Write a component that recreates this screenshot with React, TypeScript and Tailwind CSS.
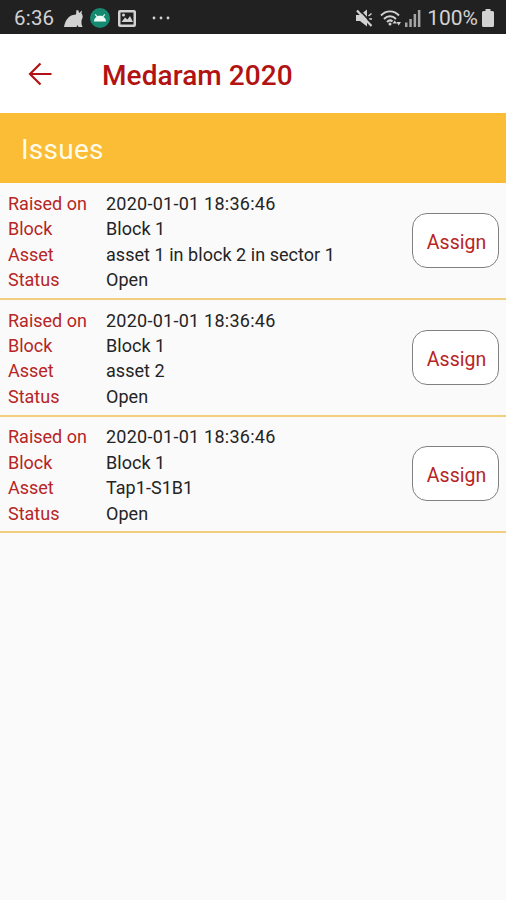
import { useState } from "react";

type Issue = {
  id: number;
  raisedOn: string;
  block: string;
  asset: string;
  status: string;
};

const issues: Issue[] = [
  { id: 1, raisedOn: "2020-01-01 18:36:46", block: "Block 1", asset: "asset 1 in block 2 in sector 1", status: "Open" },
  { id: 2, raisedOn: "2020-01-01 18:36:46", block: "Block 1", asset: "asset 2", status: "Open" },
  { id: 3, raisedOn: "2020-01-01 18:36:46", block: "Block 1", asset: "Tap1-S1B1", status: "Open" },
];

function StatusBar() {
  return (
    <div className="flex h-[34px] shrink-0 items-center justify-between bg-[#212121] pt-0.5 pr-3 pl-3.5 text-[#d2d2d2]">
      <div className="flex items-center">
        <span className="w-[50px] text-[20.5px] leading-none tracking-[0.2px]">6:36</span>

        {/* notification icons */}
        <svg width="20" height="19" viewBox="0 0 20 19" className="block" fill="currentColor">
          <path d="M0 18C1 12 4 7 9 6L12 5.500L12.500 1L14.500 1.500L15 4L18 1.500L17.500 4.500C19 6 19 9 18 10L17.500 11.500V15L18.500 18H14.500L13.500 16L12.500 18Z" />
        </svg>
        <svg width="20" height="20" viewBox="0 0 20 20" className="ml-1.5 block">
          <circle cx="10" cy="10" r="10" fill="#158a70" />
          <path d="M4 13.500C4 11.500 5 9.800 6.500 9L4.800 6.800L5.600 6.100L7.500 8.300C9 7.700 11 7.700 12.500 8.300L14.400 6.100L15.200 6.800L13.500 9C15 9.800 16 11.500 16 13.500Z" fill="#eefaf5" />
        </svg>
        <svg width="18" height="17" viewBox="0 0 18 17" className="ml-2 block" fill="currentColor">
          <path fillRule="evenodd" d="M2 0H16Q18 0 18 2V15Q18 17 16 17H2Q0 17 0 15V2Q0 0 2 0ZM2.500 2.500V14.500H15.500V2.500Z" />
          <path d="M3.500 12L7 7.500L9.500 9.500L12 6L15 12Z" />
          <circle cx="5.500" cy="5" r="1.500" />
        </svg>
        <svg width="18" height="4" viewBox="0 0 18 4" className="ml-4 block" fill="currentColor">
          <circle cx="2" cy="2" r="1.400" />
          <circle cx="9" cy="2" r="1.400" />
          <circle cx="16" cy="2" r="1.400" />
        </svg>
      </div>

      <div className="flex items-center">
        <svg width="17" height="18" viewBox="0 0 17 18" className="block">
          <path d="M0 6H4L11 0.500V17.500L4 12H0Z" fill="currentColor" />
          <path d="M12.500 7L15.500 4.500M13 10L16 10" stroke="currentColor" strokeWidth="1.500" />
          <path d="M3.500 1L17 15.500" stroke="#212121" strokeWidth="1.800" />
          <path d="M1 1.500L15.500 17" stroke="currentColor" strokeWidth="2.200" />
        </svg>
        <svg width="22" height="18" viewBox="0 0 22 18" className="ml-[7px] block" fill="none" stroke="currentColor">
          <path d="M1 6.500C6 1 14 1 19 6.500" strokeWidth="1.900" />
          <path d="M4 10C7.500 6.300 12.500 6.300 16 10" strokeWidth="1.900" />
          <path d="M7 13C9 11 11 11 12.500 12.500" strokeWidth="1.900" />
          <circle cx="10" cy="15" r="1.500" fill="currentColor" stroke="none" />
          <path d="M12.500 14.500L14.700 11.500L17 14.500ZM16.500 13H21L18.700 16.500Z" fill="currentColor" stroke="none" />
        </svg>
        <svg width="16" height="17" viewBox="0 0 16 17" className="ml-[3px] block" fill="currentColor">
          <rect x="0" y="12.500" width="2.500" height="4.500" fill="#a5a5a5" />
          <rect x="4.300" y="9" width="2.500" height="8" fill="#a5a5a5" />
          <rect x="8.600" y="4" width="2.500" height="13" fill="#a5a5a5" />
          <rect x="12.900" y="0" width="2.500" height="17" fill="#a5a5a5" />
        </svg>
        <span className="ml-1.5 text-[21px] leading-none">100%</span>
        <svg width="12" height="18" viewBox="0 0 12 18" className="ml-1 block" fill="currentColor">
          <path d="M3.500 0H8.500V2H10.500Q12 2 12 3.500V16.500Q12 18 10.500 18H1.500Q0 18 0 16.500V3.500Q0 2 1.500 2H3.500Z" />
        </svg>
      </div>
    </div>
  );
}

function Field({ label, value, valueClass = "tracking-[0.04px]" }: { label: string; value: string; valueClass?: string }) {
  return (
    <div className="flex h-[25.400px] items-center">
      <span className="w-[98px] shrink-0 text-[#b72525]">{label}</span>
      <span className={`text-[#242424] ${valueClass}`}>{value}</span>
    </div>
  );
}

export default function App() {
  const [assigned, setAssigned] = useState<number | null>(null);

  const handleAssign = (id: number) => {
    setAssigned(id === assigned ? null : id);
  };

  return (
    <div className="flex h-[900px] w-full flex-col overflow-hidden bg-[#fafafa] font-[Roboto,sans-serif]">
      <StatusBar />

      <header className="flex h-[79px] shrink-0 items-center bg-white pl-7 text-[#b31212]">
        <button aria-label="Back" className="mr-[50px] cursor-pointer">
          <svg width="24" height="24" viewBox="0 0 24 24" className="block" fill="none" stroke="currentColor" strokeWidth="2.200">
            <path d="M23.500 12H2M12.500 1.500L2 12L12.500 22.500" />
          </svg>
        </button>
        <h1 className="mt-1 text-[28px] leading-none font-medium tracking-[0.08px]">Medaram 2020</h1>
      </header>

      <div className="flex h-[70px] shrink-0 items-center bg-[#fbbc36] pt-1 pl-[21px]">
        <h2 className="text-[28px] leading-none tracking-[0.25px] text-[#fffbe9]">Issues</h2>
      </div>

      <ul className="text-[18px]">
        {issues.map((issue) => (
          <li key={issue.id} className="flex h-[116.800px] items-center justify-between border-b-2 border-[#f1cf7e] pr-[7px] pl-2">
            <div className="pt-[2px]">
              <Field label="Raised on" value={issue.raisedOn} valueClass="tracking-[0.25px]" />
              <Field label="Block" value={issue.block} />
              <Field label="Asset" value={issue.asset} />
              <Field label="Status" value={issue.status} />
            </div>
            <button
              onClick={() => handleAssign(issue.id)}
              className="h-[55px] w-[87px] cursor-pointer rounded-[15px] border border-[#808080] bg-white pt-1 pl-0.5 text-[19.5px] text-[#b72525]"
            >
              Assign
            </button>
          </li>
        ))}
      </ul>
    </div>
  );
}
